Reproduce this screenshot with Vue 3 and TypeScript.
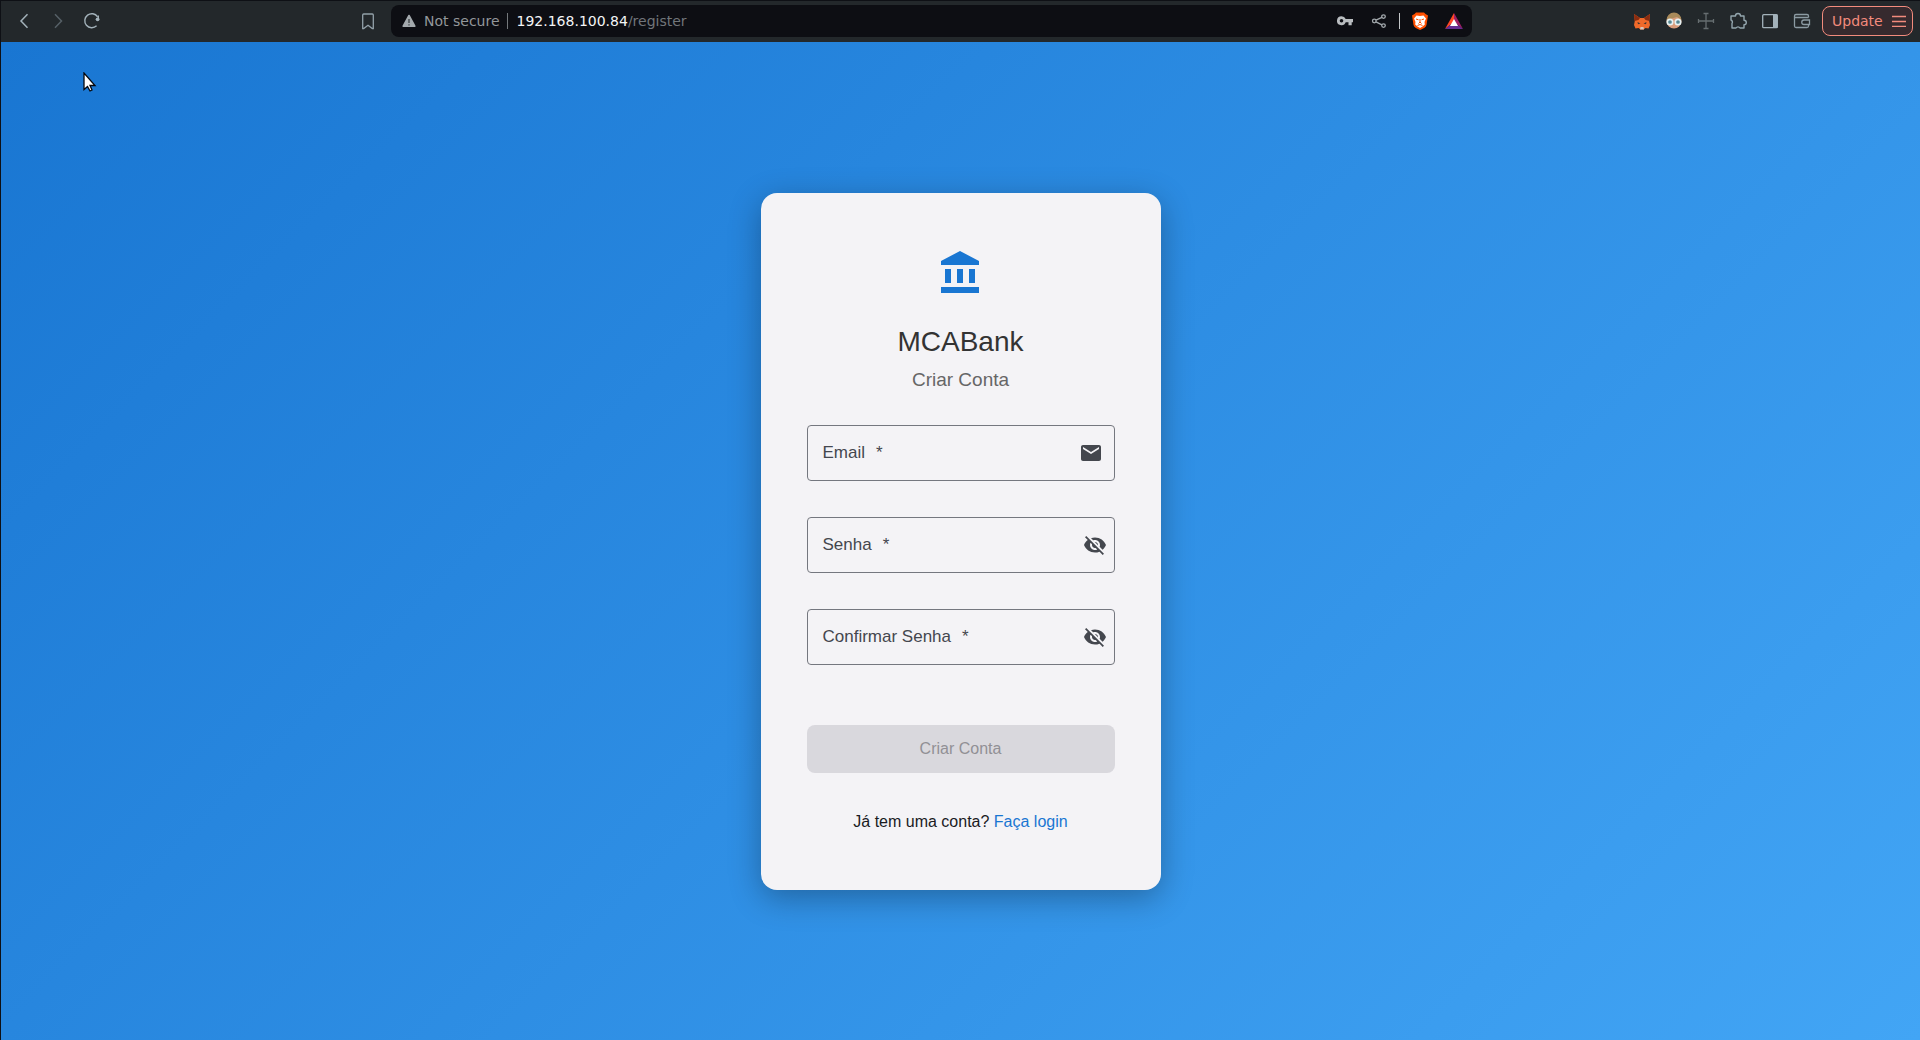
<script setup lang="ts">
import { reactive, ref } from 'vue'

type FieldKey = 'email' | 'password' | 'confirm'

interface Field {
  key: FieldKey
  label: string
  secret: boolean
}

const fields: Field[] = [
  { key: 'email', label: 'Email', secret: false },
  { key: 'password', label: 'Senha', secret: true },
  { key: 'confirm', label: 'Confirmar Senha', secret: true },
]

const form = reactive<Record<FieldKey, string>>({ email: '', password: '', confirm: '' })
const visible = reactive<Record<FieldKey, boolean>>({ email: true, password: false, confirm: false })
const ready = ref(false)

function check() {
  ready.value = form.email !== '' && form.password !== '' && form.password === form.confirm
}
</script>

<template>
  <div class="window">
    <header class="toolbar">
      <nav class="nav">
        <button class="tool" aria-label="Back">
          <svg width="24" height="24" viewBox="0 0 24 24" fill="none" stroke="#a3b2ba" stroke-width="1.5"><path d="M15.5 5.3 9 12l6.500 6.700" /></svg>
        </button>
        <button class="tool" aria-label="Forward">
          <svg width="24" height="24" viewBox="0 0 24 24" fill="none" stroke="#566067" stroke-width="1.5"><path d="M9 5.300 15.500 12 9 18.700" /></svg>
        </button>
        <button class="tool" aria-label="Reload">
          <svg width="24" height="24" viewBox="0 0 24 24" fill="none" stroke="#a3b2ba" stroke-width="1.4"><path d="M16.600 16.800A7 7 0 1 1 17.600 7.800" /><circle cx="17.600" cy="10.300" r="1.900" fill="#a3b2ba" stroke="none" /><path d="M18.300 6.500v3.500" /></svg>
        </button>
        <button class="tool bookmark" aria-label="Bookmark">
          <svg width="24" height="24" viewBox="0 0 24 24" fill="none" stroke="#93a1a9" stroke-width="1.300"><path d="M6.700 6a1 1 0 0 1 1-1h8.600a1 1 0 0 1 1 1v13.500h-1L12 16.200l-4.300 3.300h-1z" /></svg>
        </button>
      </nav>

      <div class="address">
        <svg class="warn" width="14" height="14" viewBox="0 0 14 14"><path d="M7 1.500 12.800 12.200H1.200z" fill="#a3a9ad" stroke="#a3a9ad" stroke-width="1.600" stroke-linejoin="round" /><path d="M7 5v4M7 10.200v1.300" stroke="#33373a" stroke-width="1.200" /></svg>
        <span class="status">Not secure</span>
        <span class="bar"></span>
        <span class="url"><b>192.168.100.84</b>/register</span>
        <div class="actions">
          <button class="tool" aria-label="Passwords">
            <svg width="24" height="24" viewBox="0 0 24 24"><path d="M8.500 7.200a4.500 4.500 0 1 0 4.200 6H15.500v3h3.200v-3H20V10H12.700a4.500 4.500 0 0 0-4.200-2.800zm0 2.700a1.800 1.800 0 1 1 0 3.600 1.800 1.800 0 0 1 0-3.600z" fill="#b9bdc0" /></svg>
          </button>
          <button class="tool" aria-label="Share">
            <svg width="24" height="24" viewBox="0 0 24 24" fill="none" stroke="#a3a9ad" stroke-width="1.300"><circle cx="7.300" cy="12" r="1.800" /><circle cx="16.500" cy="7.600" r="1.800" /><circle cx="16.500" cy="16.600" r="1.800" /><path d="m9 11.200 5.900-2.800M9 12.800l5.900 3" /></svg>
          </button>
          <span class="bar light"></span>
          <button class="tool" aria-label="Brave Shields">
            <svg width="24" height="24" viewBox="0 0 24 24"><path d="M8 3.500 6.500 5 4 6.500l.5 3 1 6.500c.6 2.500 3.500 3.500 6.500 5 3-1.500 5.900-2.500 6.500-5l1-6.500.5-3L17.500 5 16 3.500z" fill="#ff5000" /><path d="m8.500 6.500 3.500.5 3.500-.5 2.500 3-1.500 3.500.3 2.500-2.300 2-2.500 1.500-2.500-1.500-2.300-2 .3-2.500L6 9.500z" fill="#fff" /><path d="m8 10 2.500.8M16 10l-2.500.8M12 10v3l-1.500 1.500M12 13l1.500 1.500M9.500 16.500l2.500-1 2.500 1" stroke="#ff5000" stroke-width="1" fill="none" /></svg>
          </button>
          <button class="tool" aria-label="Brave Rewards">
            <svg width="24" height="24" viewBox="0 0 24 24"><path d="M12 4 3 20l9-7z" fill="#ff4724" /><path d="m12 4 9 16-9-7z" fill="#9e1f63" /><path d="M3 20h18l-9-7z" fill="#662d91" /><path d="m12 10 4 7H8z" fill="#fff" /></svg>
          </button>
        </div>
      </div>

      <div class="extensions">
        <button class="tool" aria-label="MetaMask">
          <svg width="24" height="24" viewBox="0 0 24 24"><path d="m4 5 6 4h4l6-4-.8 7 .8 4-1.500 3.500-3-.5-2 1.500h-3L8.500 19l-3 .5L4 16l.8-4z" fill="#f06a2a" /><path d="m4 5 6 4-1.500 2-4 1zM20 5l-6 4 1.500 2 4 1z" fill="#8a2c10" /><path d="m7.500 13 3 1.500-2.500.8zM16.500 13l-3 1.500 2.500.8z" fill="#3a3431" /><path d="M10.500 18h3l.5 2.500h-4z" fill="#d7c6bb" /></svg>
        </button>
        <button class="tool" aria-label="Profile extension">
          <svg width="24" height="24" viewBox="0 0 24 24"><circle cx="12" cy="12" r="7.500" fill="#d99d7c" /><path d="M4.500 11a7.500 7.500 0 0 1 15 0L15 8z" fill="#a98a5a" /><circle cx="8" cy="13" r="2.700" fill="#568792" stroke="#e6f1f2" stroke-width="1.700" /><circle cx="16" cy="13" r="2.700" fill="#568792" stroke="#e6f1f2" stroke-width="1.700" /></svg>
        </button>
        <button class="tool" aria-label="Capture">
          <svg width="24" height="24" viewBox="0 0 24 24" fill="none" stroke="#666d70" stroke-width="1.300"><path d="M12 4.500v15M4.500 12h15M9.500 4.500h5M9.500 19.500h5M4.500 10v4M19.500 10v4" /></svg>
        </button>
        <button class="tool" aria-label="Extensions">
          <svg width="24" height="24" viewBox="0 0 24 24" fill="none" stroke="#93a5ad" stroke-width="1.400" stroke-linejoin="round"><path d="M5 7h4.500a2.500 2.500 0 0 1 5 0H18v4.200a2.300 2.300 0 0 1 0 4.600V19h-4a2.300 2.300 0 0 0-4 0H6v-4.500a2.300 2.300 0 0 0-1-3.500z" /></svg>
        </button>
        <button class="tool" aria-label="Sidebar">
          <svg width="24" height="24" viewBox="0 0 24 24"><rect x="4.700" y="5.700" width="14.600" height="13" rx="1" fill="none" stroke="#a3b2ba" stroke-width="1.300" /><path d="M15 5.500h4.500V19H15z" fill="#a3b2ba" /></svg>
        </button>
        <button class="tool" aria-label="Wallet">
          <svg width="24" height="24" viewBox="0 0 24 24" fill="none" stroke="#8c9ba3" stroke-width="1.300"><path d="M18.500 8.500V7a1.500 1.500 0 0 0-1.500-1.500H6A1.500 1.500 0 0 0 4.500 7v10A1.500 1.500 0 0 0 6 18.500h11a1.500 1.500 0 0 0 1.500-1.500v-1M4.500 8.500h14M19.500 11H14a2 2 0 0 0 0 4.500h5.500z" /></svg>
        </button>
        <button class="update">
          Update
          <svg width="14" height="12" viewBox="0 0 14 12" fill="none" stroke="#f28b7d" stroke-width="1.300"><path d="M0 1.500h14M0 6.500h14M0 11.300h14" /></svg>
        </button>
      </div>
    </header>

    <main class="page">
      <section class="card">
        <svg class="logo" width="48" height="48" viewBox="0 0 24 24" fill="#1976d2"><path d="M4 10v7h3v-7H4zm6 0v7h3v-7h-3zM2 22h19v-3H2v3zm14-12v7h3v-7h-3zm-4.500-9L2 6v2h19V6l-9.500-5z" /></svg>
        <h1>MCABank</h1>
        <h2>Criar Conta</h2>
        <form @submit.prevent @input="check">
          <div v-for="field in fields" :key="field.key" class="field" :class="{ secret: field.secret }">
            <label :for="field.key">{{ field.label }}<span class="required">*</span></label>
            <input :id="field.key" v-model="form[field.key]" :type="visible[field.key] ? 'text' : 'password'" required />
            <button v-if="field.secret" type="button" class="tool" aria-label="Mostrar senha" @click="visible[field.key] = !visible[field.key]">
              <svg width="24" height="24" viewBox="0 0 24 24" fill="#44474e"><path d="M12 7c2.760 0 5 2.240 5 5 0 .65-.13 1.260-.36 1.830l2.920 2.920c1.510-1.260 2.700-2.890 3.430-4.750-1.730-4.390-6-7.500-11-7.500-1.400 0-2.740.25-3.980.7l2.160 2.160C10.740 7.130 11.350 7 12 7zM2 4.270l2.280 2.280.46.46C3.080 8.300 1.780 10.020 1 12c1.730 4.390 6 7.500 11 7.500 1.550 0 3.030-.3 4.380-.84l.42.42L19.730 22 21 20.730 3.270 3 2 4.270zM7.530 9.800l1.550 1.550c-.05.21-.08.43-.08.65 0 1.660 1.340 3 3 3 .22 0 .44-.03.65-.08l1.550 1.550c-.67.33-1.410.53-2.200.53-2.760 0-5-2.240-5-5 0-.79.2-1.530.53-2.200zm4.310-.78 3.150 3.150.02-.16c0-1.660-1.340-3-3-3l-.17.01z" /></svg>
            </button>
            <svg v-else width="24" height="24" viewBox="0 0 24 24" fill="#44474e"><path d="M20 4H4c-1.100 0-1.990.9-1.990 2L2 18c0 1.100.9 2 2 2h16c1.100 0 2-.9 2-2V6c0-1.100-.9-2-2-2zm0 4-8 5-8-5V6l8 5 8-5v2z" /></svg>
          </div>
          <button class="submit" type="submit" :disabled="!ready">Criar Conta</button>
        </form>
        <p class="login">Já tem uma conta? <a href="#login">Faça login</a></p>
      </section>

      <svg class="pointer" width="14" height="20" viewBox="0 0 14 20"><path d="M1 1v16.500l3.500-3 2.500 4.500 2-1-2-4.500h5z" fill="#fff" stroke="#05080f" stroke-width="1.300" /></svg>
    </main>
  </div>
</template>

<style>
body {
  margin: 0;
}
</style>

<style scoped>
* {
  box-sizing: border-box;
}

.window {
  display: flex;
  flex-direction: column;
  min-height: 100vh;
  border-top: 1px solid #0e1015;
  border-left: 1px solid #0e1015;
  font-family: "Liberation Sans", Arial, sans-serif;
}

.toolbar {
  display: grid;
  grid-template-columns: 390px minmax(0, 1fr) 448px;
  align-items: center;
  height: 41px;
  padding-bottom: 1px;
  background: #23282b;
  font-family: "DejaVu Sans", sans-serif;
  font-size: 14px;
}

.tool {
  display: flex;
  padding: 0;
  border: 0;
  background: none;
}

.nav {
  display: flex;
  gap: 10px;
  padding: 0 11px;
}

.bookmark {
  margin-left: auto;
}

.address {
  display: flex;
  align-items: center;
  height: 32px;
  padding: 0 6px 0 11px;
  border-radius: 8px;
  background: #0d0e13;
}

.status {
  margin: 0 7px 0 8px;
  color: #93979a;
}

.bar {
  width: 1px;
  height: 16px;
  margin-right: 9px;
  background: #74787b;
}

.bar.light {
  margin: 0 -2px;
  background: #c3c6c8;
}

.url {
  color: #71757a;
}

.url b {
  color: #f4f5f6;
  font-weight: 400;
}

.actions {
  display: flex;
  align-items: center;
  gap: 10px;
  margin-left: auto;
}

.extensions {
  display: flex;
  align-items: center;
  justify-content: flex-end;
  gap: 8px;
  padding-right: 7px;
}

.update {
  display: flex;
  align-items: center;
  justify-content: space-between;
  width: 91px;
  height: 30px;
  padding: 0 6px 0 9px;
  border: 1px solid #f28b7d;
  border-radius: 8px;
  background: #362a2e;
  color: #f28b7d;
  font: inherit;
}

.page {
  position: relative;
  display: flex;
  flex: 1;
  align-items: center;
  justify-content: center;
  background: linear-gradient(135deg, #1976d2, #42a5f5);
}

.card {
  display: flex;
  flex-direction: column;
  align-items: center;
  width: 400px;
  padding: 56px 46px;
  border-radius: 16px;
  background: #f4f3f6;
  box-shadow: 0 8px 32px rgba(0, 0, 0, 0.3);
}

h1 {
  margin: 29px 0 0;
  color: #333;
  font-size: 28px;
  font-weight: 400;
  line-height: 32px;
}

h2 {
  margin: 10px 0 0;
  color: #666;
  font-size: 19px;
  font-weight: 400;
  line-height: 24px;
}

form {
  display: flex;
  flex-direction: column;
  gap: 36px;
  width: 100%;
  margin-top: 33px;
}

.field {
  display: flex;
  align-items: center;
  height: 56px;
  padding: 0 11px 0 15px;
  border: 1px solid #74777f;
  border-radius: 4px;
}

.field.secret {
  padding-right: 7px;
}

label {
  color: #44474e;
  font-size: 17px;
  line-height: 24px;
}

.required {
  margin-left: 11px;
}

input {
  flex: 1;
  min-width: 0;
  padding: 0 8px;
  border: 0;
  outline: 0;
  background: none;
  font: inherit;
}

.submit {
  height: 48px;
  margin-top: 24px;
  border: 0;
  border-radius: 8px;
  background: #d9d8dd;
  color: #919095;
  font: inherit;
  font-size: 16px;
}

.login {
  margin: 37px 0 0;
  color: #1a1b1f;
  font-size: 16px;
  line-height: 24px;
}

.login a {
  color: #1976d2;
  text-decoration: none;
}

.pointer {
  position: absolute;
  top: 30px;
  left: 82px;
}
</style>
